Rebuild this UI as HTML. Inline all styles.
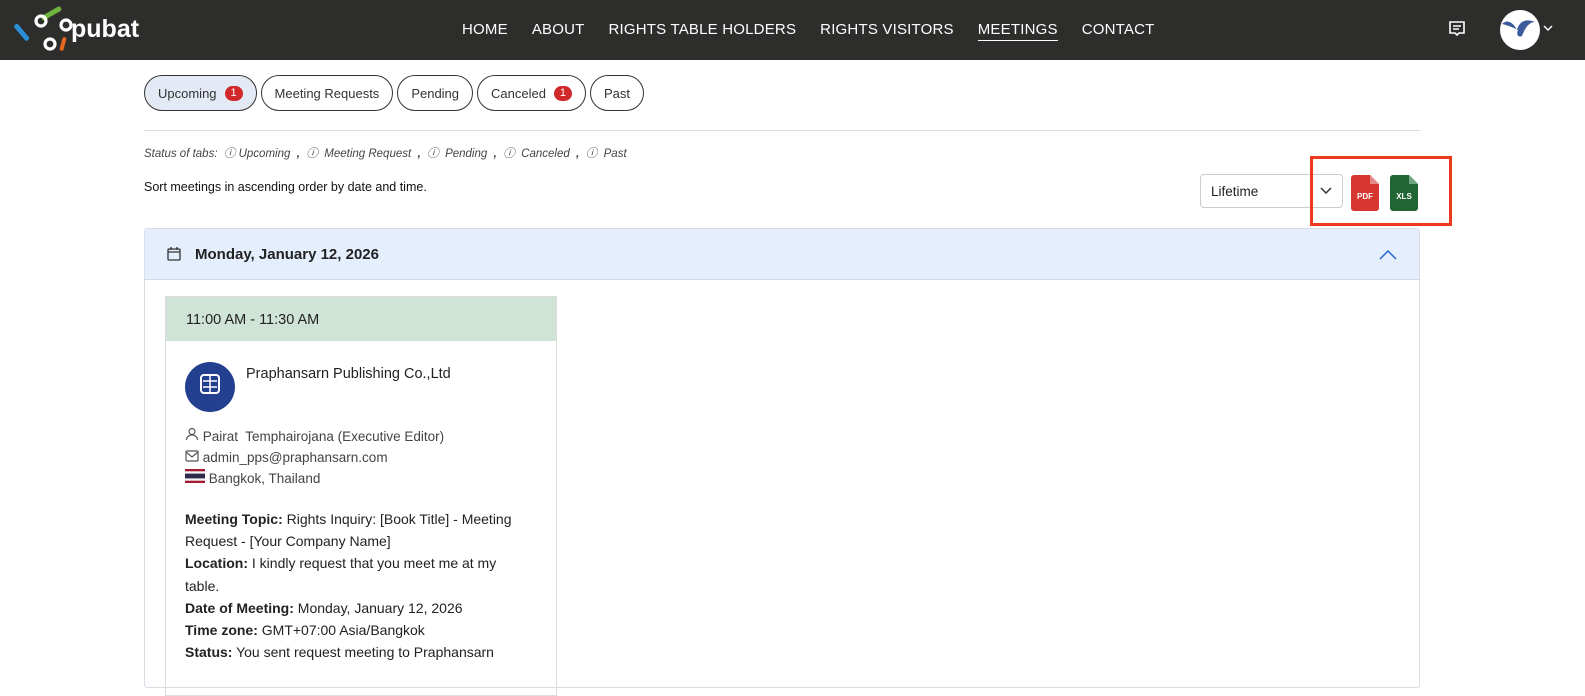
<!DOCTYPE html>
<html><head><meta charset="utf-8"><style>
*{box-sizing:border-box;margin:0;padding:0}
body{width:1585px;height:674px;overflow:hidden;background:#fff;font-family:"Liberation Sans",sans-serif;color:#222;position:relative}
.nav{height:60px;background:#2d2d2b;position:relative}
.menu{position:absolute;top:21px;left:462px;display:flex;color:#fff;font-size:15px;letter-spacing:.2px}
.menu span{margin-right:24px}
.menu .act{border-bottom:1px solid #fff;padding-bottom:2px}
.tabs{position:absolute;top:75px;left:144px;display:flex;gap:4px}
.tab{height:36px;border:1px solid #333;border-radius:18px;padding:0 13px;display:flex;align-items:center;font-size:13px;color:#333}
.tab.on{background:#e4eaf5}
.bd{display:inline-block;width:18px;height:15px;border-radius:8px;background:#d0282b;color:#fff;font-size:11px;text-align:center;line-height:15px;margin-left:8px}
.hr{position:absolute;top:130px;left:144px;width:1276px;height:1px;background:#ddd}
.status{position:absolute;top:145px;left:144px;font-size:11.5px;font-style:italic;color:#444}
.sort{position:absolute;top:180px;left:144px;font-size:12.5px;color:#111}
.sel{position:absolute;top:174px;left:1200px;width:143px;height:34px;border:1px solid #ccc;border-radius:4px;font-size:13.5px;padding:9px 10px}
.red{position:absolute;top:156px;left:1310px;width:142px;height:70px;border:3px solid #ee3a1e}
.acc{position:absolute;top:228px;left:144px;width:1276px;height:460px;border:1px solid #d8dde5;border-radius:3px}
.acch{height:51px;background:#e4eefc;border-bottom:1px solid #cfd8e5;display:flex;align-items:center;padding-left:22px;font-size:15px;font-weight:bold;color:#222}
.card{position:absolute;top:296px;left:165px;width:392px;height:400px;border:1px solid #ddd}
.time{height:44px;background:#cfe3d7;font-size:14.5px;padding:15px 20px;color:#222}
.det{font-size:13.5px;color:#444;line-height:21px}
.info{font-size:14px;line-height:22.2px;color:#222;position:absolute;top:508px;left:185px;width:340px}
.info b{font-weight:600}
</style></head><body>
<div class="nav">
<svg style="position:absolute;left:12px;top:2px" width="150" height="52" viewBox="0 0 150 52">
<rect x="28" y="9" width="22" height="5" rx="2" fill="#6fb43f" transform="rotate(-30 39 11)"/>
<rect x="0" y="28" width="20" height="5" rx="2" fill="#2b8fd6" transform="rotate(50 10 30)"/>
<rect x="44" y="40" width="14" height="4" rx="2" fill="#e2681f" transform="rotate(-75 51 42)"/>
<circle cx="29" cy="19" r="5" fill="none" stroke="#fff" stroke-width="3.2"/>
<circle cx="54" cy="23" r="5" fill="none" stroke="#fff" stroke-width="3.2"/>
<circle cx="38" cy="42" r="5" fill="none" stroke="#fff" stroke-width="3.2"/>
<text x="59" y="35" fill="#fff" font-size="25" font-weight="bold" font-family="Liberation Sans">pubat</text>
</svg>
<div class="menu"><span>HOME</span><span>ABOUT</span><span>RIGHTS TABLE HOLDERS</span><span>RIGHTS VISITORS</span><span class="act">MEETINGS</span><span>CONTACT</span></div>
<svg style="position:absolute;left:1448px;top:20px" width="18" height="18" viewBox="0 0 18 18" fill="none" stroke="#fff" stroke-width="1.6"><path d="M2 2h14v11H11l-2 2-2-2H2z"/><path d="M5 6h8M5 9h6"/></svg>
<svg style="position:absolute;left:1500px;top:10px" width="42" height="40" viewBox="0 0 42 40"><circle cx="20" cy="20" r="20" fill="#fff"/><path d="M2 14c6-6 12 0 15 6 2-8 8-12 18-8-6 0-10 6-13 14-4 2-6-2-4-6-4-2-8-4-16-6z" fill="#3b5b9a"/></svg>
<svg style="position:absolute;left:1543px;top:24px" width="10" height="8" viewBox="0 0 10 8"><path d="M1 2l4 4 4-4" stroke="#fff" fill="none" stroke-width="1.5"/></svg>
</div>
<div class="tabs">
<div class="tab on">Upcoming<span class="bd">1</span></div>
<div class="tab">Meeting Requests</div>
<div class="tab">Pending</div>
<div class="tab">Canceled<span class="bd">1</span></div>
<div class="tab">Past</div>
</div>
<div class="hr"></div>
<div class="status">Status of tabs: &nbsp;ⓘ Upcoming &nbsp;<b>,</b>&nbsp; ⓘ &nbsp;Meeting Request &nbsp;<b>,</b>&nbsp; ⓘ &nbsp;Pending &nbsp;<b>,</b>&nbsp; ⓘ &nbsp;Canceled &nbsp;<b>,</b>&nbsp; ⓘ &nbsp;Past</div>
<div class="sort">Sort meetings in ascending order by date and time.</div>
<div class="sel">Lifetime<svg style="position:absolute;right:10px;top:12px" width="12" height="8" viewBox="0 0 12 8"><path d="M1 1l5 5 5-5" stroke="#333" fill="none" stroke-width="1.5"/></svg></div>
<svg style="position:absolute;left:1351px;top:175px" width="28" height="36" viewBox="0 0 28 36"><path d="M3 0h16l9 9v24a3 3 0 0 1-3 3H3a3 3 0 0 1-3-3V3a3 3 0 0 1 3-3z" fill="#d63630"/><path d="M19 0l9 9h-9z" fill="#e68a86"/><text x="14" y="24" fill="#fff" font-size="8" font-weight="bold" text-anchor="middle" font-family="Liberation Sans">PDF</text></svg>
<svg style="position:absolute;left:1390px;top:175px" width="28" height="36" viewBox="0 0 28 36"><path d="M3 0h16l9 9v24a3 3 0 0 1-3 3H3a3 3 0 0 1-3-3V3a3 3 0 0 1 3-3z" fill="#216535"/><path d="M19 0l9 9h-9z" fill="#6ea57e"/><text x="14" y="24" fill="#fff" font-size="8" font-weight="bold" text-anchor="middle" font-family="Liberation Sans">XLS</text></svg>
<div class="red"></div>
<div class="acc"><div class="acch"><svg width="14" height="14" viewBox="0 0 14 14" fill="none" stroke="#333" stroke-width="1.3" style="margin-right:14px"><rect x="1" y="2" width="12" height="11" rx="1"/><path d="M1 5h12M4 0v3M10 0v3"/></svg>Monday, January 12, 2026
<svg style="position:absolute;right:22px;top:21px" width="18" height="10" viewBox="0 0 18 10"><path d="M1 9l8-8 8 8" stroke="#2a66c7" fill="none" stroke-width="1.5"/></svg></div></div>
<div class="card"><div class="time">11:00 AM - 11:30 AM</div></div>
<svg style="position:absolute;left:185px;top:362px" width="50" height="50" viewBox="0 0 50 50"><circle cx="25" cy="25" r="25" fill="#233f8f"/><rect x="16" y="13" width="18" height="18" rx="3" fill="none" stroke="#fff" stroke-width="2"/><path d="M18 19h14M18 25h14M25 14v16" stroke="#fff" stroke-width="1.5"/></svg>
<div style="position:absolute;left:246px;top:366px;font-size:14.5px;color:#222">Praphansarn Publishing Co.,Ltd</div>
<div class="det" style="position:absolute;left:185px;top:426px">
<div><svg width="14" height="14" viewBox="0 0 14 14" fill="none" stroke="#555" stroke-width="1.2"><circle cx="7" cy="4.5" r="3"/><path d="M1.5 13c0-3 2.5-5 5.5-5s5.5 2 5.5 5"/></svg> Pairat&nbsp; Temphairojana (Executive Editor)</div>
<div><svg width="14" height="12" viewBox="0 0 14 12" fill="none" stroke="#555" stroke-width="1.2"><rect x="1" y="1" width="12" height="10" rx="1"/><path d="M1 2l6 5 6-5"/></svg> admin_pps@praphansarn.com</div>
<div><svg width="20" height="14" viewBox="0 0 20 14"><rect width="20" height="14" fill="#a51931"/><rect y="2.3" width="20" height="9.4" fill="#f4f5f8"/><rect y="4.6" width="20" height="4.8" fill="#2d2a4a"/></svg> Bangkok, Thailand</div>
</div>
<div class="info">
<b>Meeting Topic:</b> Rights Inquiry: [Book Title] - Meeting Request - [Your Company Name]<br>
<b>Location:</b> I kindly request that you meet me at my table.<br>
<b>Date of Meeting:</b> Monday, January 12, 2026<br>
<b>Time zone:</b> GMT+07:00 Asia/Bangkok<br>
<b>Status:</b> You sent request meeting to Praphansarn
</div>
</body></html>
